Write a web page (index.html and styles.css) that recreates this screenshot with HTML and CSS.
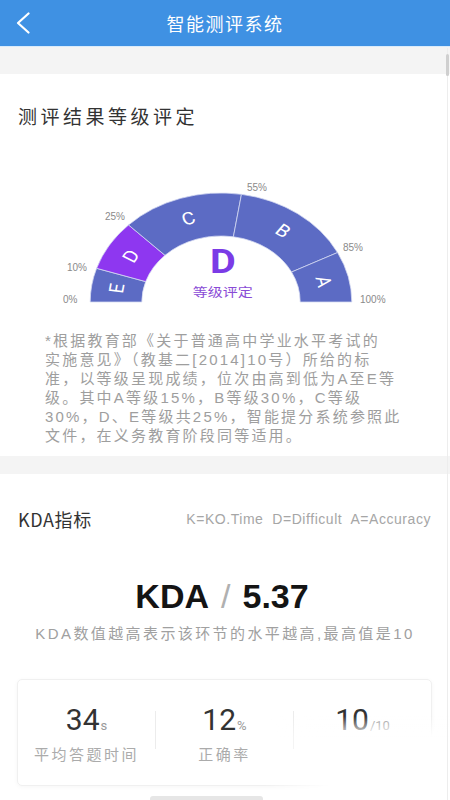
FILE: index.html
```html
<!DOCTYPE html>
<html lang="zh-CN">
<head>
<meta charset="utf-8">
<title>智能测评系统</title>
<link rel="stylesheet" href="styles.css">
</head>
<body>
<div class="page">
  <header class="topbar">
    <svg class="back" width="14" height="22" viewBox="0 0 14 22"><polyline points="12.5,1.5 2,11 12.5,20.5" fill="none" stroke="#fff" stroke-width="2.2" stroke-linecap="round" stroke-linejoin="round"/></svg>
    <h1 class="title">智能测评系统</h1>
  </header>
  <div class="band"></div>

  <section class="card grade">
    <h2 class="sec-title">测评结果等级评定</h2>
    <svg class="gauge" width="450" height="130" viewBox="0 0 450 130">
      <g class="pct">
        <text x="63" y="125">0%</text>
        <text x="67" y="93">10%</text>
        <text x="105" y="42">25%</text>
        <text x="247" y="13">55%</text>
        <text x="343" y="73">85%</text>
        <text x="360" y="125">100%</text>
      </g>
      <g transform="translate(221,124) scale(1.2,1)">
        <g class="segs">
          <path class="seg" d="M -109 0 A 109 109 0 0 1 -103.67 -33.68 L -62.77 -20.40 A 66 66 0 0 0 -66 0 Z"/>
          <path class="seg on" d="M -103.67 -33.68 A 109 109 0 0 1 -77.07 -77.07 L -46.67 -46.67 A 66 66 0 0 0 -62.77 -20.40 Z"/>
          <path class="seg" d="M -77.07 -77.07 A 109 109 0 0 1 17.05 -107.66 L 10.32 -65.19 A 66 66 0 0 0 -46.67 -46.67 Z"/>
          <path class="seg" d="M 17.05 -107.66 A 109 109 0 0 1 97.12 -49.48 L 58.81 -29.96 A 66 66 0 0 0 10.32 -65.19 Z"/>
          <path class="seg" d="M 97.12 -49.48 A 109 109 0 0 1 109 0 L 66 0 A 66 66 0 0 0 58.81 -29.96 Z"/>
        </g>
        <g class="letters">
          <text transform="translate(-86.4,-13.7) rotate(-81)">E</text>
          <text transform="translate(-74.6,-45.7) rotate(-58.5)">D</text>
          <text transform="translate(-27,-83.2) rotate(-18)">C</text>
          <text transform="translate(51.4,-70.8) rotate(36)">B</text>
          <text transform="translate(85.1,-20.4) rotate(76.5)">A</text>
        </g>
        <text class="big-grade" x="1.5" y="-29">D</text>
        <text class="grade-cap" x="1.5" y="-5">等级评定</text>
      </g>
    </svg>
    <p class="note">*根据教育部《关于普通高中学业水平考试的<br>实施意见》（教基二[2014]10号）所给的标<br>准，以等级呈现成绩，位次由高到低为A至E等<br>级。其中A等级15%，B等级30%，C等级<br>30%，D、E等级共25%，智能提分系统参照此<br>文件，在义务教育阶段同等适用。</p>
  </section>

  <div class="gap"></div>

  <section class="card kda">
    <div class="kda-head">
      <h2 class="sec-title">KDA指标</h2>
      <span class="legend">K=KO.Time  D=Difficult  A=Accuracy</span>
    </div>
    <div class="kda-value"><span>KDA</span><span class="slash">/</span><span>5.37</span></div>
    <p class="kda-sub">KDA数值越高表示该环节的水平越高,最高值是10</p>

    <div class="stats">
      <div class="stat">
        <div class="num">34<small>s</small></div>
        <div class="label">平均答题时间</div>
      </div>
      <div class="divider"></div>
      <div class="stat">
        <div class="num">12<small>%</small></div>
        <div class="label">正确率</div>
      </div>
      <div class="divider"></div>
      <div class="stat">
        <div class="num">10<small>/10</small></div>
        <div class="label">&nbsp;</div>
      </div>
    </div>
    <div class="bottom-tab"></div>
  </section>

  <div class="fade"></div>
  <div class="scroll-track"><div class="scroll-thumb"></div></div>
</div>
</body>
</html>
```
FILE: styles.css
```css
* { box-sizing: border-box; }
html, body { margin: 0; padding: 0; }
body {
  font-family: "Liberation Sans", "Noto Sans CJK SC", sans-serif;
  background: #ffffff;
  color: #333;
  width: 450px;
  height: 800px;
  overflow: hidden;
}
.page { position: relative; width: 450px; height: 800px; overflow: hidden; }

.topbar {
  height: 47px;
  background: #3f91e3;
  border-bottom: 1px solid #d9ebfb;
  display: flex;
  align-items: center;
  justify-content: center;
  position: relative;
}
.back { position: absolute; left: 16px; top: 12px; }
.title {
  margin: 0;
  font-family: "Noto Sans CJK SC", sans-serif;
  font-size: 18px;
  font-weight: 400;
  color: #fff;
  letter-spacing: 1.5px;
}
.band { height: 27px; background: #f4f4f4; }

.card { background: #fff; }
.grade { padding: 30px 0 11px; }
.sec-title {
  margin: 0 0 0 18px;
  font-family: "Noto Sans CJK SC", sans-serif;
  font-size: 19px;
  line-height: 24px;
  font-weight: 400;
  color: #333;
  letter-spacing: 3.5px;
}
.gauge { display: block; margin-top: 50px; }
.pct text { font-family: "Liberation Sans", sans-serif; font-size: 10px; fill: #8a8a8a; }
.seg { fill: #5c6bc4; stroke: #d6daf2; stroke-width: 0.7; }
.seg.on { fill: #8e37f0; }
.letters text {
  font-family: Roboto, sans-serif;
  font-size: 17px;
  fill: #fff;
  text-anchor: middle;
  dominant-baseline: central;
}
.big-grade {
  font-family: Roboto, sans-serif;
  font-weight: 700;
  font-size: 33px;
  fill: #7b3be6;
  text-anchor: middle;
}
.grade-cap {
  font-family: "Noto Sans CJK SC", sans-serif;
  font-size: 12.5px;
  fill: #8a4bd6;
  text-anchor: middle;
}
.note {
  margin: 23px 0 0 45px;
  font-family: "Liberation Sans", "Noto Sans CJK SC", sans-serif;
  font-size: 15px;
  line-height: 19px;
  letter-spacing: 2.2px;
  color: #9e9e9e;
  white-space: nowrap;
}
.gap { height: 18px; background: #f4f4f4; }

.kda { padding-top: 33px; }
.kda-head {
  display: flex;
  justify-content: space-between;
  align-items: center;
  padding-right: 19px;
}
.kda-head .sec-title { font-size: 18px; letter-spacing: 0.6px; }
.legend {
  font-size: 14px;
  color: #a6a6a6;
  white-space: pre;
  letter-spacing: 0.55px;
}
.kda-value {
  margin-top: 45px;
  text-align: center;
  font-size: 34px;
  line-height: 40px;
  font-weight: 700;
  color: #141414;
  padding-right: 6px;
}
.slash { color: #b0b0b0; font-weight: 400; margin: 0 12px; }
.kda-sub {
  margin: 8px 0 0;
  text-align: center;
  font-size: 15px;
  line-height: 20px;
  letter-spacing: 2.4px;
  color: #a0a0a0;
}

.stats {
  margin: 35px 18px 0 17px;
  height: 107px;
  padding: 24px 0 30px;
  border: 1px solid #f0f0f0;
  border-radius: 5px;
  box-shadow: 0 1px 4px rgba(0,0,0,0.04);
  display: flex;
  align-items: flex-start;
}
.stat { flex: 1; text-align: center; }
.num {
  font-family: Roboto, sans-serif;
  font-size: 30px;
  line-height: 32px;
  color: #333;
}
.num small { font-size: 13px; color: #9a9a9a; margin-left: 1px; }
.label {
  margin-top: 3px;
  font-family: "Noto Sans CJK SC", sans-serif;
  font-size: 15px;
  line-height: 18px;
  letter-spacing: 2.5px;
  color: #ababab;
}
.divider { width: 1px; height: 38px; background: #ececec; align-self: center; }
.bottom-tab {
  width: 113px;
  height: 20px;
  margin: 10px 0 0 150px;
  background: #e6e6e6;
  border-radius: 3px 3px 0 0;
}

.fade {
  position: absolute;
  left: 262px;
  top: 716px;
  width: 188px;
  height: 84px;
  background: linear-gradient(to bottom, rgba(255,255,255,0) 0, #fff 22px);
  -webkit-mask-image: linear-gradient(to right, transparent 0, #000 70px);
  mask-image: linear-gradient(to right, transparent 0, #000 70px);
}
.scroll-track {
  position: absolute;
  right: 2px;
  top: 48px;
  width: 1px;
  height: 752px;
  background: #ededed;
}
.scroll-thumb {
  position: absolute;
  left: -1px;
  top: 6px;
  width: 3px;
  height: 22px;
  background: #cfcfcf;
  border-radius: 2px;
}
```
